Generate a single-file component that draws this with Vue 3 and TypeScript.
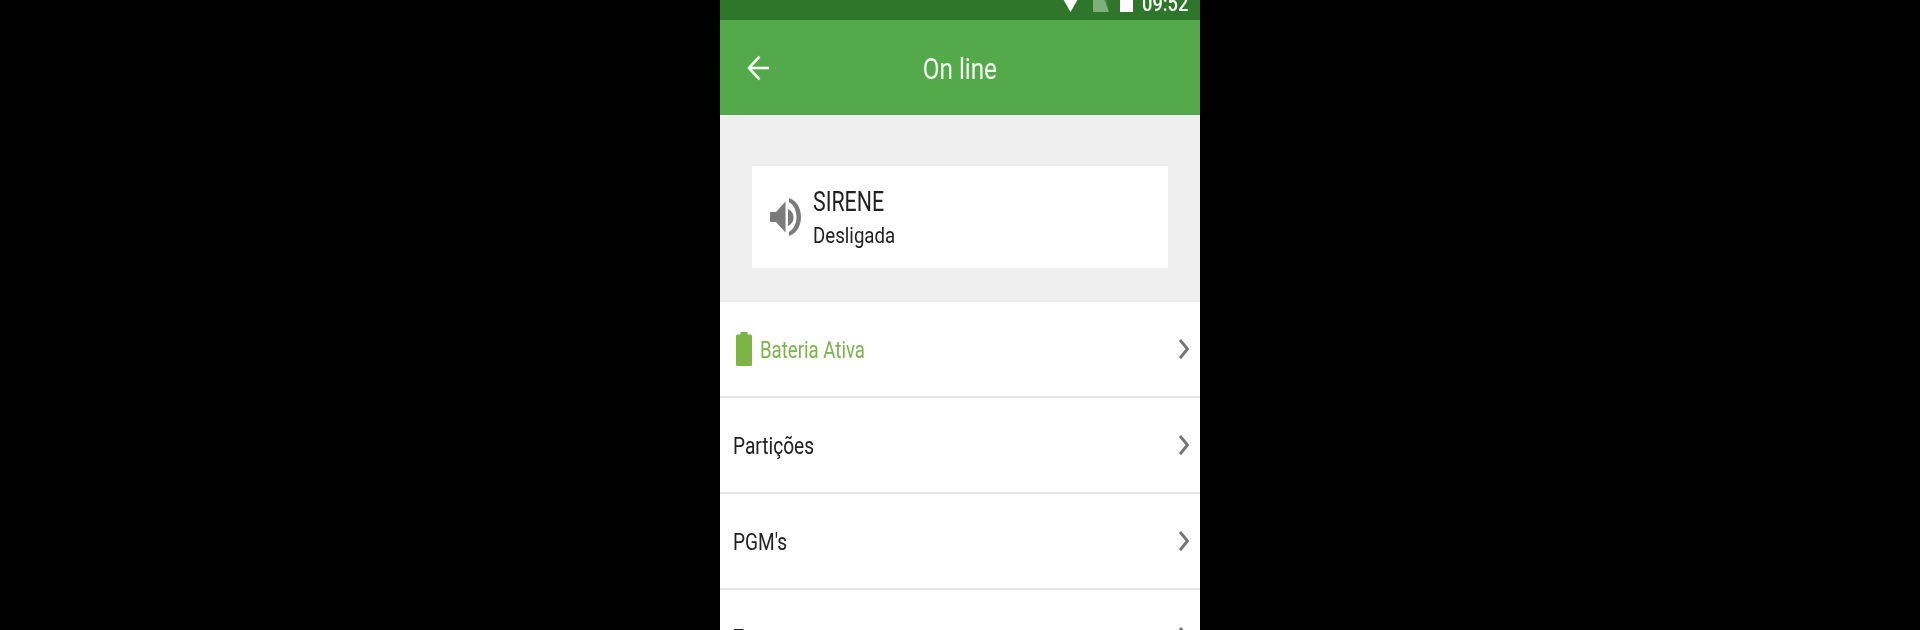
<script setup lang="ts">
interface Row { label: string; active?: boolean }
const rows: Row[] = [
  { label: 'Bateria Ativa', active: true },
  { label: 'Partições' },
  { label: "PGM's" },
  { label: 'Zonas' },
]
</script>

<template>
  <div class="page">
    <main class="phone">
      <div class="status">
        <svg class="ic-wifi" viewBox="0 0 17 20"><path d="M-3 0H20L8.500 20Z" fill="#fff" /></svg>
        <svg class="ic-cell" viewBox="0 0 16 20"><path d="M0 0H9L16 20H0Z" fill="#7fb07a" /><path d="M6 0H11L15 14Z" fill="#4f8f4a" /></svg>
        <span class="ic-batt"></span>
        <span class="time"><span class="sx">09:52</span></span>
      </div>
      <header class="toolbar">
        <svg class="back" viewBox="0 0 22 26" fill="none" stroke="#f6fbf5" stroke-width="2.600"><path d="M22 13H3" /><path d="M12.500 1.500L2 13L12.500 24.500" /></svg>
        <h1 class="title"><span class="sx t-title">On line</span></h1>
      </header>
      <section class="panel">
        <div class="card">
          <svg class="speaker" viewBox="0 0 31 38">
            <path d="M0 14H6L15.500 3.500V34.500L6 24H0Z" fill="#7b7b7b" />
            <path d="M18 11C22 13 23.500 16 23.500 19.500C23.500 23 22 26 18 28Z" fill="#7b7b7b" />
            <path d="M19 0C28 3 31 12 31 19C31 26 28 35 19 38L19 34C24 31 26.500 25 26.500 19C26.500 13 24 7 19 4Z" fill="#7b7b7b" />
          </svg>
          <div class="card-text">
            <div class="siren"><span class="sx t-siren">SIRENE</span></div>
            <div class="state"><span class="sx t-state">Desligada</span></div>
          </div>
        </div>
      </section>
      <ul class="list">
        <li v-for="r in rows" :key="r.label" class="row" :class="{ active: r.active }">
          <svg v-if="r.active" class="batt" viewBox="0 0 16 34"><path d="M4.500 0H11.500V2.500H14.500Q16 2.500 16 4V32.500Q16 34 14.500 34H1.500Q0 34 0 32.500V4Q0 2.500 1.500 2.500H4.500Z" fill="#7cb446" /></svg>
          <span class="label"><span class="sx" :class="{ 't-active': r.active }">{{ r.label }}</span></span>
          <svg class="chev" viewBox="0 0 10 20" fill="none" stroke="#757575" stroke-width="2.900"><path d="M1 1L8.500 10L1 19" /></svg>
        </li>
      </ul>
    </main>
  </div>
</template>

<style>
html, body { background: #000; }
</style>

<style scoped>
.page {
  display: flex;
  justify-content: center;
  height: 630px;
  overflow: hidden;
  background: #000;
  font-family: Roboto, "Liberation Sans", sans-serif;
}
.phone {
  width: 480px;
  height: 630px;
  overflow: hidden;
  background: #fff;
  display: flex;
  flex-direction: column;
  flex: none;
}
.sx {
  display: inline-block;
  transform: scaleX(0.83);
  transform-origin: left center;
  white-space: nowrap;
  filter: blur(0.4px);
}
svg { filter: blur(0.4px); }
.t-title { transform: scaleX(0.81); }
.t-siren { transform: scaleX(0.79); }
.t-active { transform: scaleX(0.81); }
.status {
  height: 20px;
  flex: none;
  background: #2e7629;
  display: flex;
  align-items: flex-end;
  overflow: hidden;
  padding-left: 342px;
  padding-bottom: 8px;
  box-sizing: border-box;
}
.ic-wifi { width: 17px; height: 20px; flex: none; }
.ic-cell { width: 16px; height: 20px; flex: none; margin-left: 14px; }
.ic-batt { width: 13px; height: 20px; flex: none; margin-left: 11px; background: #fff; }
.time {
  width: 60px;
  flex: none;
  margin-left: 9px;
  margin-bottom: -1px;
  color: #fff;
  font-size: 22px;
  line-height: 22px;
  height: 20px;
  font-weight: 500;
}
.toolbar {
  height: 95px;
  flex: none;
  background: #54a94a;
  display: flex;
  align-items: center;
  padding-left: 27px;
  box-sizing: border-box;
}
.back { width: 22px; height: 26px; flex: none; }
.title {
  margin: 0 0 0 -1px;
  flex: 1;
  text-align: center;
  color: #f4faf2;
  font-size: 30px;
  line-height: 38px;
  font-weight: 400;
  padding-right: 48px;
  padding-top: 2px;
}
.title .sx { transform-origin: center; }
.panel {
  height: 187px;
  flex: none;
  background: #efefef;
  padding: 51px 32px 0;
  box-sizing: border-box;
}
.card {
  height: 102px;
  background: #fff;
  display: flex;
  align-items: center;
  padding-left: 18px;
}
.speaker { width: 31px; height: 38px; flex: none; }
.card-text { margin-left: 12px; padding-top: 2px; color: #212121; }
.siren { font-size: 27px; line-height: 34px; }
.state { font-size: 22.500px; line-height: 32px; }
.list { list-style: none; margin: 0; padding: 0; }
.row {
  height: 96px;
  box-sizing: border-box;
  display: flex;
  align-items: center;
  border-bottom: 2px solid #e4e4e4;
  padding: 0 11px 0 13px;
  color: #212121;
  font-size: 23px;
}
.row.active { color: #7db24f; }
.batt { width: 16px; height: 34px; flex: none; margin: 0 8px 0 3px; }
.label { flex: 1; padding-top: 2px; }
.chev { width: 10px; height: 20px; flex: none; margin-top: -1px; }
</style>
